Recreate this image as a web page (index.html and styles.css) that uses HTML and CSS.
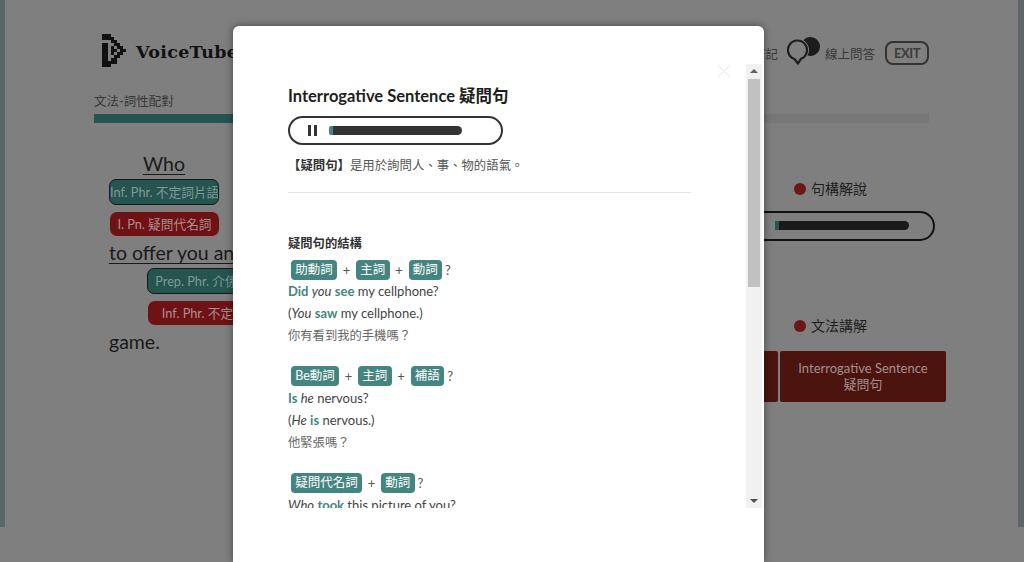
FILE: index.html
```html
<!DOCTYPE html>
<html lang="zh-TW">
<head>
<meta charset="utf-8">
<title>VoiceTube</title>
<link rel="stylesheet" href="styles.css">
</head>
<body>
<div class="page">
  <header class="top">
    <div class="brand">
      <svg class="logo" width="24" height="33" viewBox="0 0 24 33"><path fill="#111" d="M0 0h9v3h-9zM0 3h12v3h-12zM9 6h6v3h-6zM0 9h6v3h-6zM12 9h6v3h-6zM0 12h6v3h-6zM9 12h3v3h-3zM15 12h6v3h-6zM0 15h6v3h-6zM9 15h6v3h-6zM18 15h6v3h-6zM0 18h6v3h-6zM9 18h3v3h-3zM15 18h6v3h-6zM0 21h6v3h-6zM12 21h6v3h-6zM0 24h6v3h-6zM9 24h6v3h-6zM0 27h15v3h-15zM0 30h9v3h-9z"/></svg>
      <span class="wordmark">VoiceTube</span>
    </div>
    <div class="tools">
      <span class="tool-text note">筆記</span>
      <svg class="bubble" width="33" height="30" viewBox="0 0 33 30"><path fill="#1c1c1c" d="M16.440 3.150A9.500 9.500 0 1 1 20.580 18.550A11.500 11.500 0 0 0 16.440 3.150z"/><path fill="none" stroke="#1c1c1c" stroke-width="2.200" stroke-linejoin="round" d="M7.500 22A9.500 9.500 0 1 1 14 21.800L11 26.500z"/></svg>
      <span class="tool-text">線上問答</span>
      <span class="exit">EXIT</span>
    </div>
  </header>
  <div class="crumb">文法-詞性配對</div>
  <div class="progress"><div class="progress-fill"></div></div>
  <main class="columns">
    <section class="sentence">
      <div class="phrase who">
        <span class="word">Who</span>
        <span class="tag tag-teal">Inf. Phr. 不定詞片語</span>
        <span class="tag tag-red">I. Pn. 疑問代名詞</span>
      </div>
      <div class="phrase offer">
        <span class="word">to offer you an</span>
        <span class="tag tag-teal tag-long">Prep. Phr. 介係詞片語</span>
        <span class="tag tag-red tag-long">Inf. Phr. 不定詞片語</span>
      </div>
      <div class="plain">game.</div>
    </section>
    <section class="side">
      <h2 class="side-title">句構解說</h2>
      <div class="side-audio"><div class="side-track"></div></div>
      <h2 class="side-title second">文法講解</h2>
      <div class="cards">
        <div class="card card-prev"></div>
        <div class="card">Interrogative Sentence<br>疑問句</div>
      </div>
    </section>
  </main>
</div>

<div class="modal">
  <div class="close"><svg width="14" height="14" viewBox="0 0 14 14"><path stroke="#eef3f3" stroke-width="1.500" d="M1 1l12 12M13 1L1 13"/></svg></div>
  <div class="modal-scroll">
    <div class="modal-content">
      <h1 class="modal-title">Interrogative Sentence 疑問句</h1>
      <div class="player">
        <span class="pause"><i></i><i></i></span>
        <div class="track"></div>
      </div>
      <p class="intro"><b>【疑問句】</b>是用於詢問人、事、物的語氣。</p>
      <hr class="rule">
      <h3 class="sub">疑問句的結構</h3>
      <div class="formula"><span class="chip">助動詞</span><span class="op">+</span><span class="chip">主詞</span><span class="op">+</span><span class="chip">動詞</span><span class="q">?</span></div>
      <p class="line"><b>Did</b> <em>you</em> <b>see</b> my cellphone?</p>
      <p class="line">(<em>You</em> <b>saw</b> my cellphone.)</p>
      <p class="line zh">你有看到我的手機嗎？</p>
      <div class="formula gap"><span class="chip">Be動詞</span><span class="op">+</span><span class="chip">主詞</span><span class="op">+</span><span class="chip">補語</span><span class="q">?</span></div>
      <p class="line"><b>Is</b> <em>he</em> nervous?</p>
      <p class="line">(<em>He</em> <b>is</b> nervous.)</p>
      <p class="line zh">他緊張嗎？</p>
      <div class="formula gap"><span class="chip">疑問代名詞</span><span class="op">+</span><span class="chip">動詞</span><span class="q">?</span></div>
      <p class="line"><em>Who</em> <b>took</b> this picture of you?</p>
    </div>
    <div class="scrollbar">
      <span class="arrow-up"></span>
      <span class="thumb"></span>
      <span class="arrow-down"></span>
    </div>
  </div>
</div>
</body>
</html>
```
FILE: styles.css
```css
* { box-sizing: border-box; }
html, body { margin: 0; height: 562px; overflow: hidden; }
body {
  background: #7f7f7f;
  color: #1a1a1a;
  font-family: Lato, "Noto Sans CJK TC", sans-serif;
  position: relative;
}
.page {
  height: 527px;
  padding: 34px 89px 0 89px;
  border-left: 5px solid #5b6666;
  border-right: 6px solid #5b6666;
}
.top { display: flex; justify-content: space-between; height: 32px; }
.brand { display: flex; align-items: flex-start; gap: 10px; margin-left: 8px; }
.logo { display: block; }
.wordmark {
  padding-top: 8px;
  font-family: "DejaVu Serif", serif;
  font-weight: 700;
  font-size: 17.5px;
  letter-spacing: .3px;
  color: #111;
}
.tools { display: flex; align-items: center; height: 32px; margin-top: 3px; }
.tool-text { font-size: 12.5px; color: #383838; white-space: nowrap; }
.note { margin-right: 9px; }
.bubble { margin-right: 5px; margin-top: -3px; }
.exit {
  margin-left: 10px;
  width: 44px;
  height: 24px;
  border: 2px solid #333;
  border-radius: 8px;
  font-size: 13px;
  font-weight: 700;
  letter-spacing: -.4px;
  line-height: 20px;
  text-align: center;
  color: #3c3c3c;
}
.crumb { margin-top: 27px; font-size: 12.5px; line-height: 18px; color: #383838; }
.progress { margin-top: 3px; height: 9px; background: #777; }
.progress-fill { width: 300px; height: 9px; background: #26544f; }
.columns { display: flex; }
.sentence { flex: none; width: 690px; padding: 29px 0 0 15px; font-size: 19.5px; line-height: 24px; }
.phrase { display: flex; flex-direction: column; }
.word { text-decoration: underline; text-underline-offset: 3px; color: #1a1a1a; white-space: nowrap; }
.who { width: 110px; align-items: center; }
.offer { margin-top: 5px; }
.tag {
  display: block;
  width: 110px;
  text-align: center;
  font-size: 12.7px;
  white-space: nowrap;
  border-radius: 7px;
  overflow: hidden;
}
.tag-teal {
  height: 26px; line-height: 24px; margin-top: 3px;
  background: #26544f; border: 1px solid #101a1a; color: #7f9b98;
}
.tag-red {
  height: 24px; line-height: 24px; margin-top: 7px;
  background: #6e1215; color: #ab9090;
}
.who .tag-red { width: 109px; margin-left: 1px; }
.tag-long { width: 137px; margin-left: 38px; }
.offer .tag-red { margin-left: 39px; }
.plain { margin-top: 5px; line-height: 24px; }
.side { flex: 1; min-width: 0; padding-top: 57px; }
.side-title {
  margin: 0 0 0 10px;
  display: flex;
  align-items: center;
  gap: 5px;
  font-size: 14px;
  font-weight: 400;
  line-height: 18px;
  color: #1e1e1e;
}
.side-title::before {
  content: "";
  width: 12px;
  height: 12px;
  border-radius: 50%;
  background: #6c1717;
}
.side-audio {
  margin: 13px 0 0 -60px;
  width: 211px;
  height: 30px;
  border: 2px solid #111;
  border-left: 0;
  border-radius: 0 15px 15px 0;
  padding: 8px 0 0 51px;
}
.side-track {
  height: 9px;
  width: 134px;
  border-radius: 0 5px 5px 0;
  background: #1a1a1a;
  border-left: 4px solid #2a524e;
}
.second { margin-top: 76px; }
.cards { display: flex; gap: 2px; margin: 16px 0 0 -60px; }
.card {
  flex: none;
  height: 51px;
  background: #4c140f;
  color: #a39190;
  font-size: 13px;
  line-height: 16px;
  text-align: center;
  padding-top: 9px;
  white-space: nowrap;
}
.card-prev { width: 54px; border-radius: 0 2px 2px 0; }
.card:last-child { width: 166px; border-radius: 2px; }

.modal {
  position: absolute;
  left: 233px;
  top: 26px;
  width: 531px;
  height: 536px;
  background: #fff;
  border-radius: 6px 6px 0 0;
  box-shadow: 0 0 9px rgba(0, 0, 0, .45);
}
.close { position: absolute; top: 38px; left: 484px; width: 14px; height: 14px; line-height: 0; }
.modal-scroll {
  position: absolute;
  left: 0;
  right: 2px;
  top: 38px;
  height: 444px;
  display: flex;
  overflow: hidden;
}
.modal-content { flex: 1; padding: 22px 55px 0 55px; color: #444; overflow: hidden; }
.modal-title {
  margin: 0;
  font-size: 16.5px;
  font-weight: 700;
  line-height: 20px;
  color: #1e1e1e;
  white-space: nowrap;
}
.player {
  display: flex;
  align-items: center;
  margin-top: 10px;
  width: 215px;
  height: 29px;
  border: 2px solid #333;
  border-radius: 15px;
  padding-left: 18px;
}
.pause { display: flex; gap: 3px; margin-right: 12px; }
.pause i { display: block; width: 3px; height: 11px; background: #333; }
.track {
  width: 133px;
  height: 9px;
  border-radius: 2px 5px 5px 2px;
  background: #333;
  border-left: 4px solid #45857f;
}
.intro {
  margin: 12px 0 0;
  font-family: "Noto Sans CJK TC", sans-serif;
  font-size: 12.4px;
  line-height: 16px;
  color: #555;
  white-space: nowrap;
}
.intro b { color: #333; }
.rule { margin: 19px 0 0; width: 403px; border: 0; border-top: 1px solid #e6e6e6; }
.sub { margin: 43px 0 0; font-size: 12.3px; font-weight: 700; line-height: 16px; color: #333; }
.formula { display: flex; align-items: center; margin-top: 8px; padding-left: 3px; height: 20px; }
.gap { margin-top: 20px; }
.chip {
  height: 20px;
  padding: 0 4.250px;
  background: #45857f;
  border-radius: 4px;
  color: #fff;
  font-size: 12.5px;
  line-height: 20px;
  white-space: nowrap;
}
.op { width: 19px; text-align: center; font-size: 13px; color: #555; }
.q { margin-left: 3px; font-size: 13px; color: #555; }
.line { margin: 0; font-size: 13px; line-height: 22px; color: #444; white-space: nowrap; }
.gap + .line { margin-top: 1px; }
.line b { font-weight: 700; color: #45857f; }
.zh { font-family: "Noto Sans CJK TC", sans-serif; font-size: 12.3px; color: #666; }
.scrollbar {
  width: 16px;
  flex: none;
  background: #f1f1f1;
  position: relative;
  padding-top: 15px;
}
.thumb { display: block; margin: 0 2px; height: 208px; background: #c1c1c1; }
.arrow-up, .arrow-down {
  position: absolute;
  left: 4px;
  width: 0;
  height: 0;
  border-left: 4px solid transparent;
  border-right: 4px solid transparent;
}
.arrow-up { top: 5px; border-bottom: 4px solid #606060; }
.arrow-down { bottom: 5px; border-top: 4px solid #505050; }
```
